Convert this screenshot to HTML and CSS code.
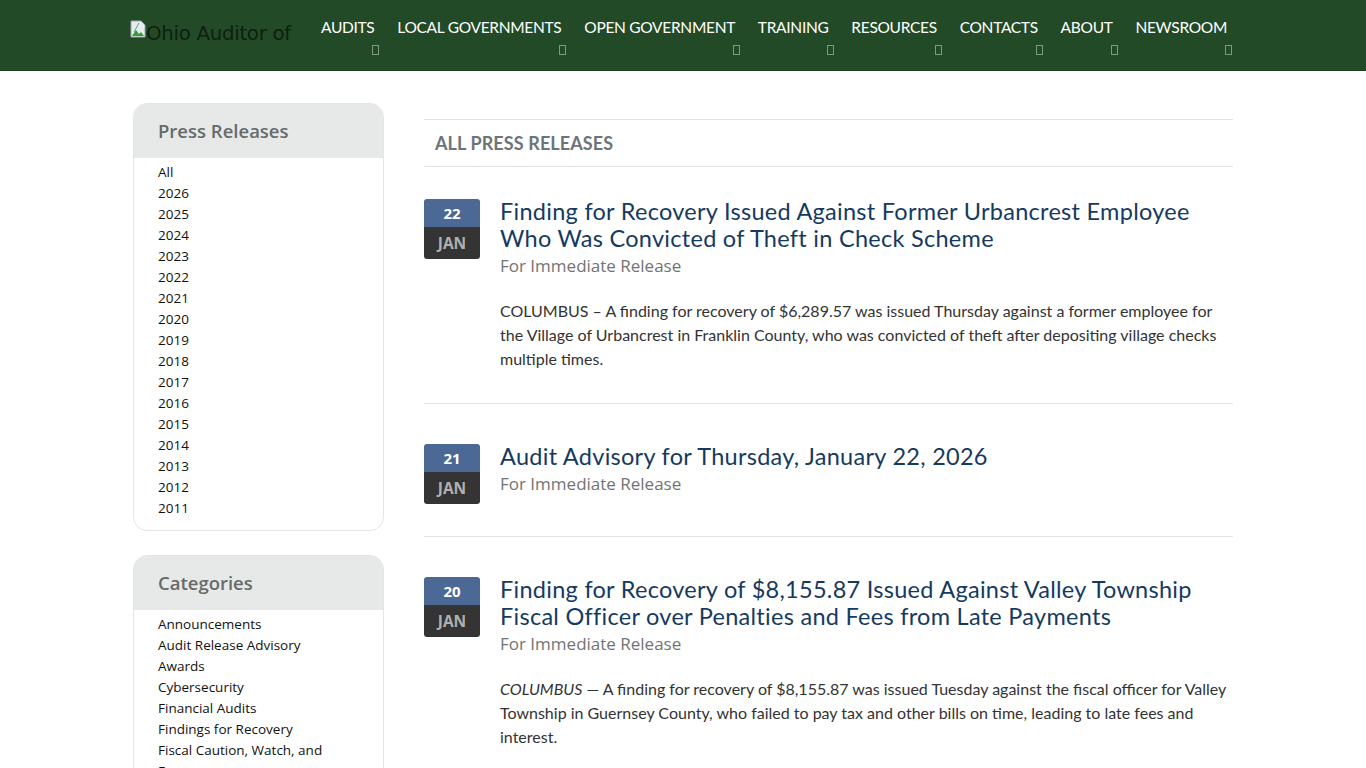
FILE: index.html
```html
<!DOCTYPE html>
<html lang="en">
<head>
<meta charset="utf-8">
<title>Press Releases - Ohio Auditor of State</title>
<link rel="stylesheet" href="styles.css">
</head>
<body>
<header class="topbar">
  <div class="topbar-inner">
    <a class="logo" href="#">
      <svg class="broken" width="16" height="18" viewBox="0 0 16 18"><path d="M1 1h10l4 4v12H1z" fill="#e8ecef" stroke="#9aa" stroke-width="1"/><path d="M2 16l4-6 3 4 2-2 3 4z" fill="#3a9a3a"/><path d="M9 3l-5 9" stroke="#4a8" stroke-width="1"/></svg>
      <span>Ohio Auditor of</span>
    </a>
    <nav class="mainnav">
      <a class="navitem" href="#"><span>AUDITS</span><i class="caret"></i></a>
      <a class="navitem" href="#"><span>LOCAL GOVERNMENTS</span><i class="caret"></i></a>
      <a class="navitem" href="#"><span>OPEN GOVERNMENT</span><i class="caret"></i></a>
      <a class="navitem" href="#"><span>TRAINING</span><i class="caret"></i></a>
      <a class="navitem" href="#"><span>RESOURCES</span><i class="caret"></i></a>
      <a class="navitem" href="#"><span>CONTACTS</span><i class="caret"></i></a>
      <a class="navitem" href="#"><span>ABOUT</span><i class="caret"></i></a>
      <a class="navitem" href="#"><span>NEWSROOM</span><i class="caret"></i></a>
    </nav>
  </div>
</header>

<div class="page">
  <aside class="sidebar">
    <section class="card">
      <h2 class="card-title">Press Releases</h2>
      <ul class="card-list">
        <li><a href="#">All</a></li>
        <li><a href="#">2026</a></li>
        <li><a href="#">2025</a></li>
        <li><a href="#">2024</a></li>
        <li><a href="#">2023</a></li>
        <li><a href="#">2022</a></li>
        <li><a href="#">2021</a></li>
        <li><a href="#">2020</a></li>
        <li><a href="#">2019</a></li>
        <li><a href="#">2018</a></li>
        <li><a href="#">2017</a></li>
        <li><a href="#">2016</a></li>
        <li><a href="#">2015</a></li>
        <li><a href="#">2014</a></li>
        <li><a href="#">2013</a></li>
        <li><a href="#">2012</a></li>
        <li><a href="#">2011</a></li>
      </ul>
    </section>
    <section class="card">
      <h2 class="card-title">Categories</h2>
      <ul class="card-list">
        <li><a href="#">Announcements</a></li>
        <li><a href="#">Audit Release Advisory</a></li>
        <li><a href="#">Awards</a></li>
        <li><a href="#">Cybersecurity</a></li>
        <li><a href="#">Financial Audits</a></li>
        <li><a href="#">Findings for Recovery</a></li>
        <li><a href="#">Fiscal Caution, Watch, and Emergency</a></li>
        <li><a href="#">Local Government Services</a></li>
      </ul>
    </section>
  </aside>

  <main class="content">
    <h1 class="section-title">ALL PRESS RELEASES</h1>

    <article class="release">
      <div class="datebox"><span class="day">22</span><span class="mon">JAN</span></div>
      <div class="release-body">
        <h3 class="release-title"><a href="#">Finding for Recovery Issued Against Former Urbancrest Employee Who Was Convicted of Theft in Check Scheme</a></h3>
        <p class="release-sub">For Immediate Release</p>
        <p class="release-text">COLUMBUS – A finding for recovery of $6,289.57 was issued Thursday against a former employee for the Village of Urbancrest in Franklin County, who was convicted of theft after depositing village checks multiple times.</p>
      </div>
    </article>

    <article class="release">
      <div class="datebox"><span class="day">21</span><span class="mon">JAN</span></div>
      <div class="release-body">
        <h3 class="release-title"><a href="#">Audit Advisory for Thursday, January 22, 2026</a></h3>
        <p class="release-sub">For Immediate Release</p>
      </div>
    </article>

    <article class="release">
      <div class="datebox"><span class="day">20</span><span class="mon">JAN</span></div>
      <div class="release-body">
        <h3 class="release-title"><a href="#">Finding for Recovery of $8,155.87 Issued Against Valley Township Fiscal Officer over Penalties and Fees from Late Payments</a></h3>
        <p class="release-sub">For Immediate Release</p>
        <p class="release-text"><em>COLUMBUS</em> — A finding for recovery of $8,155.87 was issued Tuesday against the fiscal officer for Valley Township in Guernsey County, who failed to pay tax and other bills on time, leading to late fees and interest.</p>
      </div>
    </article>
  </main>
</div>
</body>
</html>
```
FILE: styles.css
```css
* { box-sizing: border-box; }
html, body { margin: 0; padding: 0; }
body {
  background: #fff;
  font-family: "Open Sans", "Noto Sans", sans-serif;
  color: #222;
}
a { color: inherit; text-decoration: none; }

.topbar {
  background: #234a27;
  height: 71px;
  border-bottom: 1px solid #1d3f21;
}
.topbar-inner {
  width: 1108px;
  margin: 0 auto;
  display: flex;
  align-items: flex-start;
  padding-left: 1px;
  padding-right: 10px;
}
.logo {
  display: flex;
  align-items: flex-start;
  padding-top: 20px;
  width: 191px;
  color: #0e200e;
  font-family: "DejaVu Sans", sans-serif;
  font-size: 19.8px;
  letter-spacing: -0.3px;
  white-space: nowrap;
}
.logo .broken { flex: none; }
.logo span { margin-top: 2px; }

.mainnav {
  flex: 1;
  display: flex;
  justify-content: space-between;
  padding-top: 17px;
}
.navitem {
  display: flex;
  flex-direction: column;
  align-items: flex-end;
  color: #fff;
  font-family: "Lato", sans-serif;
  font-size: 15.5px;
  letter-spacing: -0.3px;
  line-height: 20px;
}
.navitem span { align-self: flex-start; }
.caret {
  display: block;
  width: 7px;
  height: 10px;
  border: 1px solid #7d9a80;
  margin-top: 8px;
  margin-right: -5px;
}

.page {
  width: 1100px;
  margin: 0 auto;
  display: grid;
  grid-template-columns: 251px 1fr;
  column-gap: 40px;
  padding-top: 32px;
}

.sidebar { display: flex; flex-direction: column; gap: 24px; }
.card {
  border: 1px solid #e3e6e4;
  border-radius: 14px;
  overflow: hidden;
  background: #fff;
}
.card-title {
  margin: 0;
  background: #e6e9e7;
  height: 54px;
  padding: 15px 24px 0;
  font-family: "Open Sans", sans-serif;
  font-weight: 600;
  font-size: 18.5px;
  line-height: 24px;
  color: #666b6a;
}
.card-list {
  list-style: none;
  margin: 0;
  padding: 4px 24px 11px;
  font-family: "Open Sans", sans-serif;
  font-size: 13.5px;
  line-height: 21px;
  color: #111;
}

.content { padding-top: 16px; }
.section-title {
  margin: 0 0 32px;
  border-top: 1px solid #dfe3e1;
  border-bottom: 1px solid #dfe3e1;
  height: 48px;
  padding: 11px 11px 0;
  font-family: "Lato", sans-serif;
  font-weight: 700;
  font-size: 18px;
  line-height: 24px;
  letter-spacing: 0.1px;
  color: #6d7479;
}

.release {
  display: flex;
  gap: 20px;
  padding-bottom: 32px;
  margin-bottom: 40px;
  border-bottom: 1px solid #e2e5e3;
}
.datebox {
  flex: none;
  width: 56px;
  height: 60px;
  border-radius: 3px;
  overflow: hidden;
  display: flex;
  flex-direction: column;
  font-family: "Open Sans", sans-serif;
  font-weight: 700;
  text-align: center;
}
.datebox .day {
  background: #4c6894;
  color: #fff;
  height: 28px;
  line-height: 28px;
  font-size: 15px;
}
.datebox .mon {
  background: #343434;
  color: #b0b0b0;
  height: 32px;
  line-height: 32px;
  font-size: 15.5px;
}
.release-body { flex: 1; margin-top: -1px; }
.release-title {
  margin: 0;
  font-family: "Lato", sans-serif;
  font-weight: 400;
  font-size: 23.5px;
  line-height: 27px;
  color: #153a61;
  letter-spacing: 0.28px;
}
.release-sub {
  margin: 0;
  font-family: "Open Sans", sans-serif;
  font-size: 17px;
  line-height: 28px;
  color: #737373;
}
.release-text {
  margin: 19px 0 0;
  font-family: "Lato", sans-serif;
  font-size: 16px;
  line-height: 24px;
  color: #333;
  padding-right: 4px;
}
```
